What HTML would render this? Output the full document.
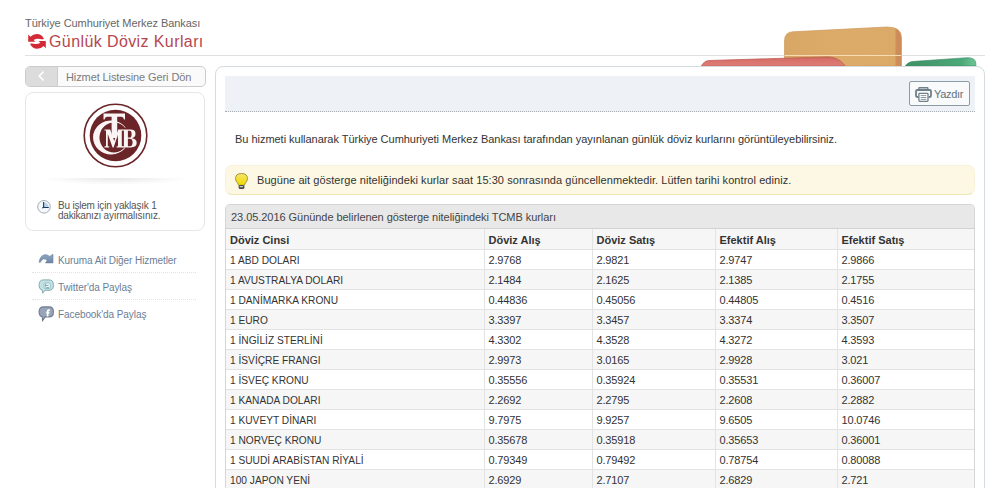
<!DOCTYPE html>
<html><head><meta charset="utf-8">
<style>
*{margin:0;padding:0;box-sizing:border-box}
html,body{width:1006px;height:488px;overflow:hidden;background:#fff}
body{font-family:"Liberation Sans",sans-serif;font-size:11px;color:#333;position:relative}
.abs{position:absolute}
#inst{left:25px;top:17px;color:#666;font-size:11px;white-space:nowrap;letter-spacing:-0.06px}
#title{left:49px;top:33px;color:#b6474f;font-size:16px;white-space:nowrap;letter-spacing:0.4px;line-height:17px}
#ticon{left:26px;top:32px}
#hline{left:25px;top:55px;width:960px;height:1px;background:#e0e0e0}
#notes{left:690px;top:20px}
#back{left:25px;top:66px;width:181px;height:21px;border:1px solid #cccccc;border-radius:5px;background:#fafafa;overflow:hidden}
#back .arr{position:absolute;left:0;top:0;width:32px;height:19px;background:#dcdcdc;border-right:1px solid #cdcdcd}
#back svg{position:absolute;left:12px;top:4px}
#back .txt{position:absolute;left:40px;top:4px;color:#7a7a7a;font-size:11px;white-space:nowrap;letter-spacing:-0.1px}
#card{left:25px;top:92px;width:180px;height:139px;border:1px solid #e6e6e6;border-radius:8px;background:#fff}
#logo{left:82px;top:102px}
#shadow{left:40px;top:178px;width:150px;height:7px;background:radial-gradient(ellipse at 50% 0%,rgba(0,0,0,0.09),rgba(0,0,0,0) 70%)}
#clock{left:37px;top:200px}
#sure{left:58px;top:201px;color:#555;font-size:10px;line-height:10px;white-space:nowrap;letter-spacing:-0.2px}
.lnk{position:absolute;left:58px;color:#6b8095;white-space:nowrap;font-size:10px;letter-spacing:-0.08px}
.sep{position:absolute;left:32px;width:164px;height:1px;border-top:1px dotted #e2e2e2}
.licon{position:absolute;left:38px}
#panel{left:215px;top:66px;width:770px;height:440px;border:1px solid #d5dbdf;border-radius:8px;background:#fff}
#toolbar{left:225px;top:76px;width:750px;height:36px;background:#eef2f6;border-bottom:1px dotted #a6aeb4}
#yazdir{left:909px;top:81px;width:61px;height:25px;border:1px solid #8c9ca5;border-radius:2px;background:#f9fafb}
#yazdir svg{position:absolute;left:5px;top:5px}
#yazdir span{position:absolute;left:24px;top:6px;color:#62727c;white-space:nowrap;letter-spacing:-0.3px}
#desc{left:235px;top:133px;color:#333;white-space:nowrap;letter-spacing:-0.03px}
#notice{left:225px;top:165px;width:750px;height:30px;border:1px solid #f8f2da;border-bottom-color:#f0e7b6;border-radius:7px;background:#fdf8e3}
#notice svg{position:absolute;left:9px;top:7px}
#notice span{position:absolute;left:31px;top:8px;color:#333;white-space:nowrap;letter-spacing:0.06px}
#tbl{left:225px;top:204px;width:750px;height:300px;border:1px solid #d6d6d6;border-bottom:none;border-radius:5px 5px 0 0;overflow:hidden;background:#fff}
#tbl .cap{height:24px;background:#e8e8e8;border-bottom:1px solid #d2d2d2;padding:6px 0 0 5px;color:#444;white-space:nowrap;letter-spacing:-0.05px}
table{border-collapse:collapse;table-layout:fixed;width:749px}
td,th{height:20px;border-bottom:1px solid #e3e3e3;border-left:1px solid #e3e3e3;padding:4px 0 0 4px;text-align:left;white-space:nowrap;color:#333;font-size:11px;vertical-align:top;line-height:13px}
td:first-child,th:first-child{border-left:none}
th{background:#f6f6f6;font-weight:bold;color:#333;padding-top:5px}
tr.alt td{background:#f6f6f6}
td{letter-spacing:-0.15px}
td:first-child{letter-spacing:0}
.nm{display:inline-block;transform:scaleX(0.925);transform-origin:0 0}
</style></head><body>
<div id="hline" class="abs"></div>
<svg id="notes" class="abs" width="300" height="50" viewBox="0 0 300 50">
  <defs>
    <linearGradient id="go" x1="0" y1="0" x2="1" y2="0"><stop offset="0" stop-color="#d9a765"/><stop offset="0.5" stop-color="#dcab6a"/><stop offset="0.94" stop-color="#dcaa68"/><stop offset="0.955" stop-color="#cf8e59"/><stop offset="1" stop-color="#cc8a56"/></linearGradient>
    <linearGradient id="gr" x1="0" y1="0" x2="0" y2="1"><stop offset="0" stop-color="#c2625a"/><stop offset="0.25" stop-color="#d86f69"/><stop offset="1" stop-color="#de7d77"/></linearGradient>
    <linearGradient id="gg" x1="0" y1="0" x2="1" y2="0"><stop offset="0" stop-color="#3f8f66"/><stop offset="0.8" stop-color="#4aa979"/><stop offset="1" stop-color="#6fc595"/></linearGradient>
  </defs>
  <path d="M94.5 46 V21 Q94.5 12 103 11.8 L196.3 7 Q211.5 6.5 211.5 18 V46 Z" fill="url(#go)" stroke="#cf9a5c" stroke-width="0.7"/>
  <rect x="94.5" y="35" width="117" height="1" fill="#f6dcb2"/>
  <path d="M11.5 46 Q14 40.5 20 40.5 L138 36.9 Q148 36.9 154.6 45.2 L155 46 Z" fill="url(#gr)" stroke="#bf5d55" stroke-width="0.8"/>
  <path d="M215.3 46 Q218 41.5 225 41.3 L277 37.7 Q285.9 37.3 285.9 44 V46 Z" fill="url(#gg)" stroke="#3d8a62" stroke-width="0.6"/>
</svg>
<div id="inst" class="abs">Türkiye Cumhuriyet Merkez Bankası</div>
<svg id="ticon" class="abs" width="22" height="18" viewBox="0 0 22 18">
  <g id="arrTop"><path d="M2.2 2.6 L2.2 9.8 L9.4 9.8 L7.6 8.1 Q10.5 6.2 14.3 7.1 Q16.4 7.5 18 7 Q15.8 2 10.8 2 Q6.8 2 4.4 4.8 Z" fill="#d42a36"/></g>
  <path d="M2.2 2.6 L2.2 9.8 L9.4 9.8 L7.6 8.1 Q10.5 6.2 14.3 7.1 Q16.4 7.5 18 7 Q15.8 2 10.8 2 Q6.8 2 4.4 4.8 Z" fill="#d42a36" transform="rotate(180 11 9.4)"/>
</svg>
<div id="title" class="abs">Günlük Döviz Kurları</div>
<div id="panel" class="abs"></div>
<div id="back" class="abs"><div class="arr"></div><svg width="8" height="12" viewBox="0 0 8 12"><path d="M5.6 0.6 L1.2 5 L5.6 9.4" fill="none" stroke="#fff" stroke-width="1.6"/></svg><div class="txt">Hizmet Listesine Geri Dön</div></div>
<div id="card" class="abs"></div>
<svg id="logo" class="abs" width="66" height="66" viewBox="0 0 66 66">
  <circle cx="33.5" cy="33.5" r="31.3" fill="#fff" stroke="#6b2428" stroke-width="1.6"/>
  <circle cx="33.5" cy="33.5" r="25.8" fill="#6b2428"/>
  <g fill="#fbf4f4">
  <path d="M43.2 25 A18 17 0 1 0 42.6 46.7 L42.9 45.3 A14.5 15 0 1 1 43.4 26.3 Z"/>
  <path d="M21.5 11.5 H43 V17.5 H42 Q41.5 15 39.5 14.8 H35.2 V36 H29.6 V14.8 H25.2 Q23 15 22.5 17.5 H21.5 Z"/>
  <path d="M22.5 27.6 H28.2 L32.2 39 L36.2 27.6 H41.2 V28.6 H39.8 V44.3 H41.2 V45.4 H34.6 V44.3 H36 V32.6 L31.6 45.4 H30.6 L25.8 32 V44.3 H27.2 V45.4 H22.5 V44.3 H24 V28.6 H22.5 Z"/>
  <path fill-rule="evenodd" d="M40.5 27.6 H48.5 Q53.5 27.6 53.5 31.8 Q53.5 35.5 49.8 36.2 Q54.7 36.8 54.7 40.8 Q54.7 45.4 48.8 45.4 H40.5 V44.3 H41.9 V28.6 H40.5 Z M45.9 28.8 V35.6 H47.6 Q49.6 35.6 49.6 32.2 Q49.6 28.8 47.6 28.8 Z M45.9 36.8 V44.2 H47.9 Q50.6 44.2 50.6 40.5 Q50.6 36.8 47.9 36.8 Z"/>
  </g>
</svg>
<div id="shadow" class="abs"></div>
<svg id="clock" class="abs" width="15" height="15" viewBox="0 0 15 15">
  <circle cx="7" cy="6.8" r="6.3" fill="#f4f7fb" stroke="#a3abb5" stroke-width="1"/>
  <path d="M6.6 2.2 V7.5 H11.8 Q11.6 3 6.6 2.2Z" fill="#b4d0ec"/>
  <path d="M6.6 2.1 V7.5 H11.8 M5.2 7.9 L6.6 7.5" fill="none" stroke="#1f3a5a" stroke-width="1.1"/>
</svg>
<div id="sure" class="abs">Bu işlem için yaklaşık 1<br>dakikanızı ayırmalısınız.</div>
<svg class="licon abs" style="top:254px" width="16" height="10" viewBox="0 0 16 10">
  <defs><linearGradient id="ga" x1="0" y1="0" x2="0" y2="1"><stop offset="0" stop-color="#8fa7c2"/><stop offset="1" stop-color="#6f88a6"/></linearGradient></defs>
  <path d="M1.1 8.2 Q2.3 0.8 7.3 0.7 Q10 0.7 11.6 2.4 L15 0.3 V8.9 H7.4 L9.2 6.6 Q7.6 4.6 5.4 4.9 Q3.3 5.3 2.4 8.3 Z" fill="url(#ga)" stroke="#6a819c" stroke-width="0.6"/>
</svg>
<div class="lnk" style="top:255px">Kuruma Ait Diğer Hizmetler</div>
<div class="sep" style="top:272px"></div>
<svg class="licon abs" style="top:279px" width="17" height="16" viewBox="0 0 17 16">
  <path d="M5.6 0.9 H10.9 Q15.4 0.9 15.4 5.6 V6.6 Q15.4 11.3 10.9 11.3 H7 L4.6 14.2 L4.2 11.1 Q1.1 10.3 1.1 6.6 V5.6 Q1.1 0.9 5.6 0.9Z" fill="#c3e2e6" stroke="#84a9af" stroke-width="1"/>
  <rect x="6" y="4" width="6.3" height="5.5" rx="1.2" fill="#f2fbfc" stroke="#84b5bb" stroke-width="0.8"/>
  <path d="M7.6 4.8 V7.8 Q7.6 8.6 8.4 8.6 H11 M7.6 6.4 H10.6" fill="none" stroke="#7aa9b0" stroke-width="1"/>
</svg>
<div class="lnk" style="top:282px">Twitter'da Paylaş</div>
<div class="sep" style="top:299px"></div>
<svg class="licon abs" style="top:306px" width="17" height="16" viewBox="0 0 17 16">
  <path d="M5.6 0.9 H10.9 Q15.4 0.9 15.4 5.6 V6.2 Q15.4 10.9 10.9 10.9 H7.2 L4.6 14.6 L4.2 10.7 Q1.1 9.9 1.1 6.2 V5.6 Q1.1 0.9 5.6 0.9Z" fill="#98a4b7" stroke="#6f7b8e" stroke-width="1.1"/>
  <path d="M11.8 4.2 H10.6 Q9.6 4.2 9.6 5.4 V10.6 M8.2 6.6 H11.4" fill="none" stroke="#fff" stroke-width="1.7"/>
</svg>
<div class="lnk" style="top:309px">Facebook'da Paylaş</div>
<div id="toolbar" class="abs"></div>
<div id="yazdir" class="abs">
<svg width="17" height="16" viewBox="0 0 17 16">
  <path d="M3.8 2.6 V1.4 Q3.8 0.7 4.5 0.7 H12.2 Q12.9 0.7 12.9 1.4 V2.6" fill="none" stroke="#6f7f89" stroke-width="1.4"/>
  <path d="M3.4 10 H2.2 Q1 10 1 8.8 V4.3 Q1 3 2.3 3 H14.7 Q16 3 16 4.3 V8.8 Q16 10 14.8 10 H13.6" fill="none" stroke="#6f7f89" stroke-width="1.8"/>
  <rect x="3.9" y="6.4" width="9.1" height="7.9" rx="0.8" fill="#fff" stroke="#6f7f89" stroke-width="1.3"/>
  <path d="M5.6 8.6 H11.3 M5.6 10.5 H11.3 M5.6 12.4 H11.3" stroke="#7d8c95" stroke-width="0.9"/>
</svg><span>Yazdır</span></div>
<div id="desc" class="abs">Bu hizmeti kullanarak Türkiye Cumhuriyeti Merkez Bankası tarafından yayınlanan günlük döviz kurlarını görüntüleyebilirsiniz.</div>
<div id="notice" class="abs">
<svg width="14" height="17" viewBox="-0.5 -0.5 14 17">
  <defs><linearGradient id="gb" x1="0" y1="0" x2="0" y2="1"><stop offset="0" stop-color="#f6e66a"/><stop offset="1" stop-color="#f0d800"/></linearGradient></defs>
  <path d="M6 0 Q12 0 12 5.2 Q12 7.2 10.2 9.2 Q9 10.6 9 11.8 H3 Q3 10.6 1.8 9.2 Q0 7.2 0 5.2 Q0 0 6 0Z" fill="url(#gb)" stroke="#9d8d35" stroke-width="0.9"/>
  <rect x="3.1" y="11.6" width="5.8" height="3.9" rx="1.5" fill="#4a4a4a"/>
  <rect x="4.2" y="12.6" width="3.2" height="1.1" fill="#e0e0e0"/>
</svg><span>Bugüne ait gösterge niteliğindeki kurlar saat 15:30 sonrasında güncellenmektedir. Lütfen tarihi kontrol ediniz.</span></div>
<div id="tbl" class="abs">
<div class="cap">23.05.2016 Gününde belirlenen gösterge niteliğindeki TCMB kurları</div>
<table>
<colgroup><col style="width:258px"><col style="width:108px"><col style="width:123px"><col style="width:122px"><col style="width:138px"></colgroup>
<tr><th>Döviz Cinsi</th><th>Döviz Alış</th><th>Döviz Satış</th><th>Efektif Alış</th><th>Efektif Satış</th></tr>
<tr><td><span class="nm">1 ABD DOLARI</span></td><td>2.9768</td><td>2.9821</td><td>2.9747</td><td>2.9866</td></tr>
<tr class="alt"><td><span class="nm">1 AVUSTRALYA DOLARI</span></td><td>2.1484</td><td>2.1625</td><td>2.1385</td><td>2.1755</td></tr>
<tr><td><span class="nm">1 DANİMARKA KRONU</span></td><td>0.44836</td><td>0.45056</td><td>0.44805</td><td>0.4516</td></tr>
<tr class="alt"><td><span class="nm">1 EURO</span></td><td>3.3397</td><td>3.3457</td><td>3.3374</td><td>3.3507</td></tr>
<tr><td><span class="nm">1 İNGİLİZ STERLİNİ</span></td><td>4.3302</td><td>4.3528</td><td>4.3272</td><td>4.3593</td></tr>
<tr class="alt"><td><span class="nm">1 İSVİÇRE FRANGI</span></td><td>2.9973</td><td>3.0165</td><td>2.9928</td><td>3.021</td></tr>
<tr><td><span class="nm">1 İSVEÇ KRONU</span></td><td>0.35556</td><td>0.35924</td><td>0.35531</td><td>0.36007</td></tr>
<tr class="alt"><td><span class="nm">1 KANADA DOLARI</span></td><td>2.2692</td><td>2.2795</td><td>2.2608</td><td>2.2882</td></tr>
<tr><td><span class="nm">1 KUVEYT DİNARI</span></td><td>9.7975</td><td>9.9257</td><td>9.6505</td><td>10.0746</td></tr>
<tr class="alt"><td><span class="nm">1 NORVEÇ KRONU</span></td><td>0.35678</td><td>0.35918</td><td>0.35653</td><td>0.36001</td></tr>
<tr><td><span class="nm">1 SUUDİ ARABİSTAN RİYALİ</span></td><td>0.79349</td><td>0.79492</td><td>0.78754</td><td>0.80088</td></tr>
<tr class="alt"><td><span class="nm">100 JAPON YENİ</span></td><td>2.6929</td><td>2.7107</td><td>2.6829</td><td>2.721</td></tr>
</table>
</div>
</body></html>
